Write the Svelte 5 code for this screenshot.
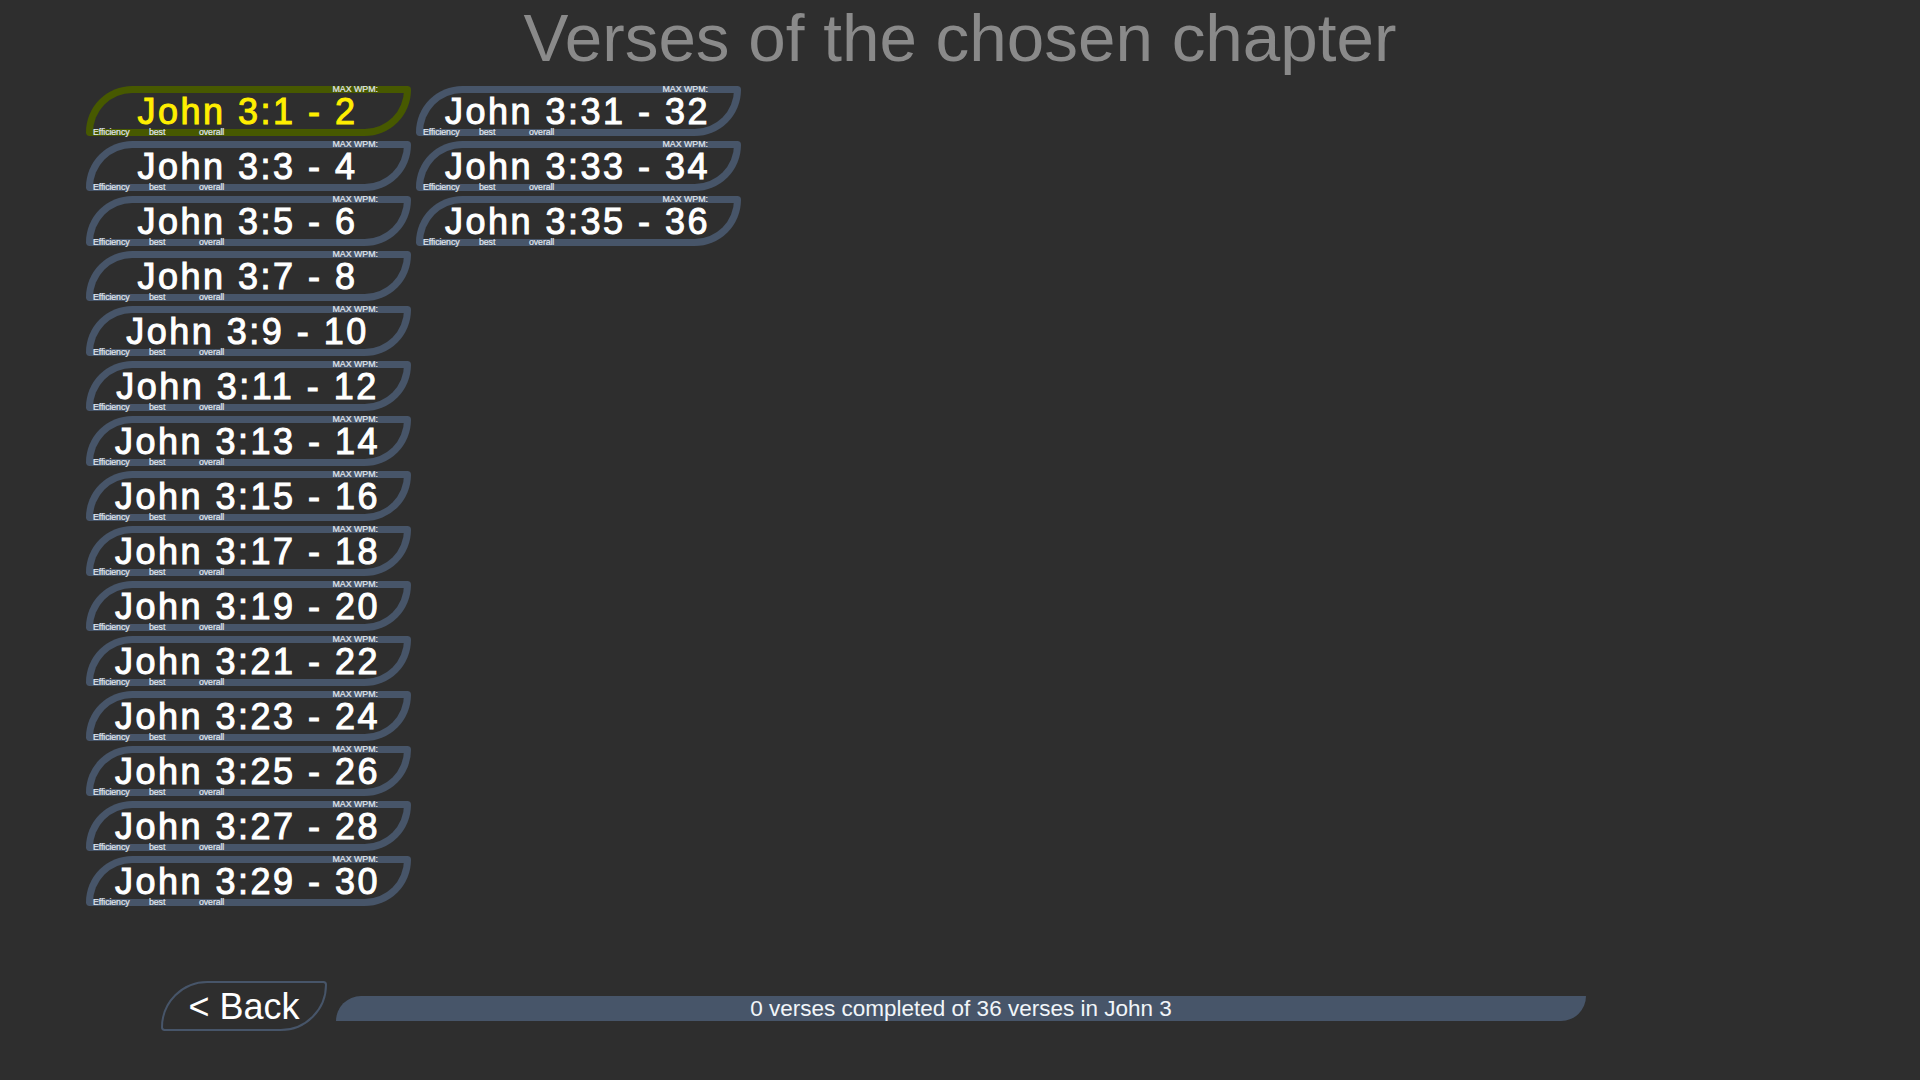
<script>
  const verses = [];
  for (let i = 1; i < 36; i += 2) verses.push(`John 3:${i} - ${i + 1}`);
</script>

<main>
  <h1>Verses of the chosen chapter</h1>
  <div class="list">
    {#each verses as v, i}
      <button class="verse" class:active={i === 0}>
        <span class="wpm">MAX WPM:</span>
        <span class="name">{v}</span>
        <span class="stats">
          <span class="eff">Efficiency</span>
          <span class="best">best</span>
          <span>overall</span>
        </span>
      </button>
    {/each}
  </div>
  <div class="footer">
    <button class="back">&lt; Back</button>
    <div class="progress">0 verses completed of 36 verses in John 3</div>
  </div>
</main>

<style>
  :global(body) {
    margin: 0;
    background: #2e2e2e;
    font-family: "Liberation Sans", Arial, sans-serif;
  }
  main {
    height: 1080px;
    box-sizing: border-box;
    overflow: hidden;
  }
  h1 {
    margin: 0;
    height: 86px;
    font-size: 67.4px;
    line-height: 76px;
    font-weight: 400;
    text-align: center;
    color: #8a8a8a;
  }
  .list {
    height: 895px;
    box-sizing: border-box;
    padding-left: 86px;
    display: grid;
    grid-auto-flow: column;
    grid-template-rows: repeat(15, 50px);
    grid-auto-columns: 325px;
    row-gap: 5px;
    column-gap: 5px;
    align-content: start;
  }
  .verse {
    position: relative;
    box-sizing: border-box;
    padding: 1px 2px 0 0;
    background: transparent;
    border: 7px solid #475569;
    border-radius: 50px 4px 50px 4px;
    color: #fff;
    font-family: inherit;
    text-align: center;
  }
  .verse.active {
    border-color: #475900;
    color: #ffee00;
  }
  .name {
    display: block;
    font-size: 36px;
    line-height: 36px;
    letter-spacing: 2.5px;
    -webkit-text-stroke: 1px currentColor;
  }
  .wpm {
    position: absolute;
    top: -9px;
    right: 26px;
    font-size: 8.8px;
    line-height: 10px;
    color: #e2e8f0;
    -webkit-text-stroke: 0.2px currentColor;
  }
  .stats {
    position: absolute;
    left: 0;
    bottom: -8px;
    display: flex;
    font-size: 8.8px;
    letter-spacing: -0.1px;
    line-height: 10px;
    color: #e2e8f0;
    -webkit-text-stroke: 0.2px currentColor;
  }
  .eff { width: 56px; text-align: left; }
  .best { width: 50px; text-align: left; }
  .footer {
    display: flex;
    align-items: center;
    padding-left: 161px;
    gap: 9px;
  }
  .back {
    box-sizing: border-box;
    width: 166px;
    height: 50px;
    padding: 2px 0 0;
    background: transparent;
    border: 2px solid #475569;
    border-radius: 50px 4px 50px 4px;
    color: #fff;
    font-family: inherit;
    font-size: 36px;
  }
  .progress {
    width: 1250px;
    height: 25px;
    margin-top: 5px;
    background: #475569;
    border-radius: 25px 0 25px 0;
    color: #f1f5f9;
    font-size: 22.5px;
    line-height: 25px;
    text-align: center;
  }
</style>
